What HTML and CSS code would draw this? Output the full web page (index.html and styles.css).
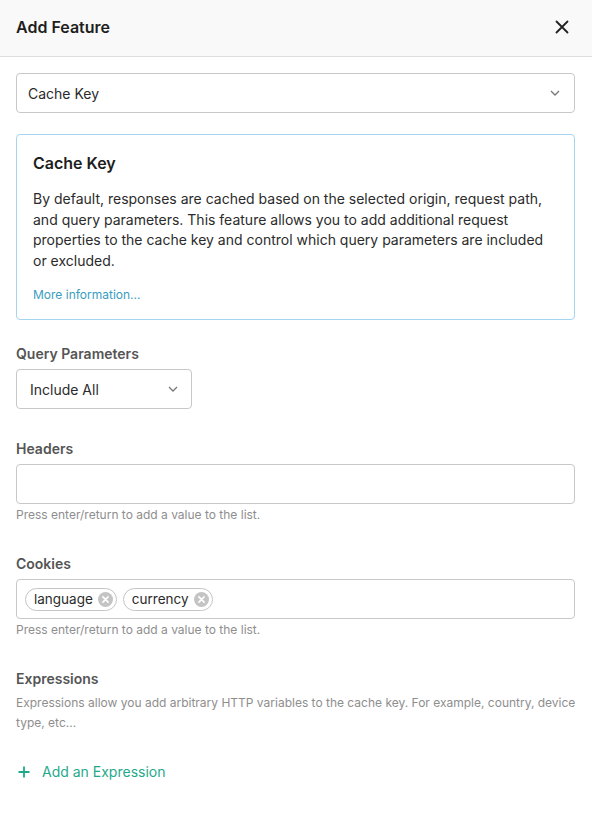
FILE: index.html
```html
<!DOCTYPE html>
<html>
<head>
<meta charset="utf-8">
<link rel="stylesheet" href="styles.css">
</head>
<body>
<div class="panel">
  <header class="header">
    <h1 class="title">Add Feature</h1>
    <button class="close" aria-label="Close">
      <svg width="14" height="14" viewBox="0 0 14 14"><path d="M1.5 1.5L12.5 12.5M12.5 1.5L1.5 12.5" stroke="#222" stroke-width="1.8" stroke-linecap="round"/></svg>
    </button>
  </header>
  <main class="body">
    <div class="select select-full">
      <span>Cache Key</span>
      <svg class="chev" width="10" height="6" viewBox="0 0 10 6"><path d="M1 1L5 5L9 1" fill="none" stroke="#777" stroke-width="1.3"/></svg>
    </div>
    <section class="info">
      <h2 class="info-title">Cache Key</h2>
      <p class="info-text">By default, responses are cached based on the selected origin, request path, and query parameters. This feature allows you to add additional request properties to the cache key and control which query parameters are included or excluded.</p>
      <a class="more" href="#">More information...</a>
    </section>
    <div class="group group-query">
      <label class="label">Query Parameters</label>
      <div class="select select-small">
        <span>Include All</span>
        <svg class="chev" width="10" height="6" viewBox="0 0 10 6"><path d="M1 1L5 5L9 1" fill="none" stroke="#777" stroke-width="1.3"/></svg>
      </div>
    </div>
    <div class="group group-headers">
      <label class="label">Headers</label>
      <div class="input"></div>
      <p class="help">Press enter/return to add a value to the list.</p>
    </div>
    <div class="group group-cookies">
      <label class="label">Cookies</label>
      <div class="input chips">
        <span class="chip">language<span class="chip-x"><svg width="15" height="15" viewBox="0 0 14 14"><circle cx="7" cy="7" r="7" fill="#c4c4c4"/><path d="M4.6 4.6L9.4 9.4M9.4 4.6L4.6 9.4" stroke="#fff" stroke-width="1.6" stroke-linecap="round"/></svg></span></span>
        <span class="chip">currency<span class="chip-x"><svg width="15" height="15" viewBox="0 0 14 14"><circle cx="7" cy="7" r="7" fill="#c4c4c4"/><path d="M4.6 4.6L9.4 9.4M9.4 4.6L4.6 9.4" stroke="#fff" stroke-width="1.6" stroke-linecap="round"/></svg></span></span>
      </div>
      <p class="help">Press enter/return to add a value to the list.</p>
    </div>
    <div class="group group-expr">
      <label class="label">Expressions</label>
      <p class="desc">Expressions allow you add arbitrary HTTP variables to the cache key. For example, country, device type, etc...</p>
      <a class="add" href="#">
        <svg width="12" height="12" viewBox="0 0 12 12"><path d="M6 0.5V11.5M0.5 6H11.5" stroke="#1faa8b" stroke-width="1.8"/></svg>
        <span>Add an Expression</span>
      </a>
    </div>
  </main>
</div>
</body>
</html>
```
FILE: styles.css
```css
* { box-sizing: border-box; }
html, body { margin: 0; padding: 0; background: #fff; }
body {
  font-family: Inter, "Noto Sans", sans-serif;
  color: #222;
  width: 592px;
  height: 820px;
  overflow: hidden;
}
.header {
  height: 57px;
  background: #f9f9f9;
  border-bottom: 1px solid #dedede;
  display: flex;
  align-items: center;
  justify-content: space-between;
  padding: 0 16px 2px;
}
.title {
  margin: 0;
  font-size: 16px;
  font-weight: 600;
  color: #1e1e1e;
  line-height: 20px;
}
.close {
  border: 0;
  background: transparent;
  padding: 0;
  width: 14px;
  height: 14px;
  display: flex;
  margin-right: 7px;
}
.body { padding: 16px 16px 0; }
.select {
  height: 40px;
  border: 1px solid #c8c8c8;
  border-radius: 4px;
  display: flex;
  align-items: center;
  justify-content: space-between;
  font-size: 14px;
  color: #2b2b2b;
  background: #fff;
}
.select-full { width: 559px; padding: 0 14px 0 11px; }
.select-small { width: 176px; padding: 0 13px 0 13px; }
.info {
  width: 559px;
  margin-top: 21px;
  border: 1px solid #a6d5f2;
  border-radius: 4px;
  padding: 18px 16px 16px;
}
.info-title {
  margin: 0;
  font-size: 16px;
  font-weight: 600;
  line-height: 20px;
  color: #1e1e1e;
}
.info-text {
  margin: 16px 0 0;
  font-size: 14px;
  line-height: 20.5px;
  color: #2b2b2b;
}
.more {
  display: block;
  margin-top: 16px;
  font-size: 12px;
  line-height: 16px;
  color: #3a9dc1;
  text-decoration: none;
}
.group { display: flex; flex-direction: column; }
.label {
  font-size: 14px;
  font-weight: 600;
  line-height: 20px;
  color: #555;
  margin-bottom: 5px;
}
.group-query { margin-top: 24px; }
.group-headers { margin-top: 30px; }
.group-cookies { margin-top: 31px; }
.group-expr { margin-top: 31px; }
.input {
  width: 559px;
  height: 40px;
  border: 1px solid #c8c8c8;
  border-radius: 4px;
  background: #fff;
}
.help {
  margin: 3px 0 0;
  font-size: 12px;
  line-height: 16px;
  color: #8e8e8e;
}
.chips {
  display: flex;
  align-items: center;
  gap: 6px;
  padding: 0 8px;
}
.chip {
  display: inline-flex;
  align-items: center;
  height: 23px;
  border: 1px solid #c4c4c4;
  border-radius: 12px;
  padding: 0 3px 0 8px;
  font-size: 13.5px;
  color: #2b2b2b;
  gap: 5px;
}
.chip-x { display: flex; }
.desc {
  margin: 0;
  font-size: 12px;
  line-height: 20px;
  color: #8e8e8e;
  margin-top: -1px;
}
.add {
  display: flex;
  align-items: center;
  gap: 12px;
  margin-top: 29px;
  padding-left: 2px;
  font-size: 14px;
  line-height: 20px;
  color: #1faa8b;
  text-decoration: none;
}
```
